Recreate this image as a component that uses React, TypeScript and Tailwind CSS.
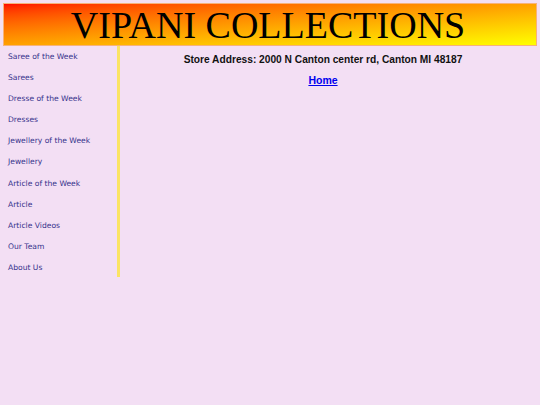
import React from "react";

const links = [
  "Saree of the Week",
  "Sarees",
  "Dresse of the Week",
  "Dresses",
  "Jewellery of the Week",
  "Jewellery",
  "Article of the Week",
  "Article",
  "Article Videos",
  "Our Team",
  "About Us",
];

const App: React.FC = () => {
  return (
    <div className="min-h-[405px] bg-[#f3dff4] pt-[3px]">
      <div className="mx-[3px] h-[43px] border border-[#f7b27a] bg-gradient-to-br from-[#ff0000] to-[#ffff00] flex items-center justify-center">
        <h1 className="font-['Liberation_Serif',serif] text-[38px] leading-none text-black mt-[1px] mr-[4px]">
          VIPANI COLLECTIONS
        </h1>
      </div>
      <div className="flex">
        <nav className="w-[120px] border-r-[3px] border-[#fbe464] pt-[5px] flex flex-col">
          {links.map((l) => (
            <a
              key={l}
              href="#"
              className="h-[21.1px] last:h-[15px] pl-[8px] font-['Comic_Sans_MS','DejaVu_Sans',sans-serif] text-[7.6px] leading-[12px] text-[#36338c]"
            >
              {l}
            </a>
          ))}
        </nav>
        <main className="flex-1 flex flex-col items-center pt-[7px] font-['Liberation_Sans',Arial,sans-serif] pr-[14px]">
          <p className="text-[10.2px] leading-[14px] font-bold text-[#111]">
            Store Address: 2000 N Canton center rd, Canton MI 48187
          </p>
          <a href="#" className="mt-[6px] text-[10.5px] leading-[14px] font-bold text-[#0000ee] underline">
            Home
          </a>
        </main>
      </div>
    </div>
  );
};

export default App;
